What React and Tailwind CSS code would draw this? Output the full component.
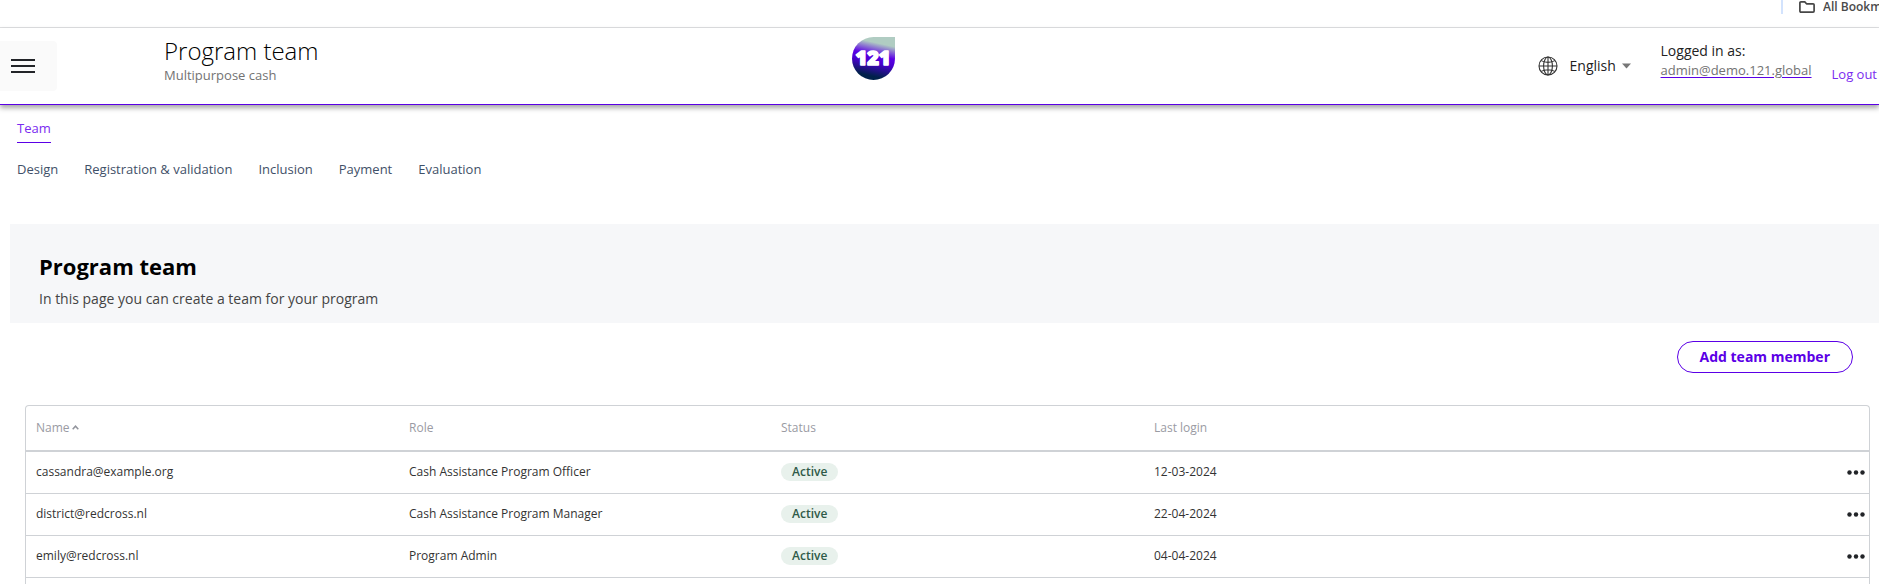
const phases = ["Design", "Registration & validation", "Inclusion", "Payment", "Evaluation"];

const members = [
  { name: "cassandra@example.org", role: "Cash Assistance Program Officer", status: "Active", lastLogin: "12-03-2024" },
  { name: "district@redcross.nl", role: "Cash Assistance Program Manager", status: "Active", lastLogin: "22-04-2024" },
  { name: "emily@redcross.nl", role: "Program Admin", status: "Active", lastLogin: "04-04-2024" },
];

function BookmarksBar() {
  return (
    <div className="flex h-7 shrink-0 items-start justify-end overflow-hidden border-b border-[#dfe0e2]">
      <div className="h-[14px] w-[2px] bg-[#d3e3fd]" />
      <svg className="mt-px ml-4 h-3 w-4 shrink-0" viewBox="0 0 16 12" fill="none" stroke="#474747" strokeWidth="1.7" strokeLinejoin="round">
        <path d="M0.9 1.9a1 1 0 0 1 1-1h3.900l1.700 1.900h6.600a1 1 0 0 1 1 1v6.300a1 1 0 0 1-1 1H1.900a1 1 0 0 1-1-1z" />
      </svg>
      <div className="ml-2 w-14 overflow-hidden text-xs leading-[14px] font-semibold whitespace-nowrap text-[#4a4a4a]">
        All Bookmarks
      </div>
    </div>
  );
}

function Logo() {
  return (
    <svg className="h-[43px] w-[43px]" viewBox="0 0 43 43" role="img" aria-label="121">
      <defs>
        <linearGradient id="drop" x1="0.62" y1="0" x2="0.4" y2="1">
          <stop offset="0.14" stopColor="#b0ccc2" />
          <stop offset="0.42" stopColor="#5b00e6" />
          <stop offset="0.58" stopColor="#4a00cf" />
          <stop offset="0.9" stopColor="#00214a" />
        </linearGradient>
      </defs>
      <path d="M21.500 0H43V21.500A21.500 21.500 0 1 1 21.500 0Z" fill="url(#drop)" />
      <text x="21" y="28" textAnchor="middle" fontFamily="'Open Sans', sans-serif" fontWeight="800" fontSize="20" fill="#fff" stroke="#fff" strokeWidth="1.6" strokeLinejoin="round">
        121
      </text>
    </svg>
  );
}

function GlobeIcon() {
  return (
    <svg className="mr-3 size-5" viewBox="0 0 20 20" fill="none" stroke="#333" strokeWidth="1.100" aria-hidden="true">
      <circle cx="10" cy="10" r="9" />
      <ellipse cx="10" cy="10" rx="4.400" ry="9" />
      <path d="M10 1v18M1 10h18M3.200 4.600C7 6.900 13 6.900 16.800 4.600M3.200 15.400c3.800-2.300 9.800-2.300 13.600 0" />
    </svg>
  );
}

function Header() {
  return (
    <header className="relative grid h-[77px] shrink-0 grid-cols-[13fr_auto_15fr] border-b border-[#5b00e6] shadow-[0_3px_5px_rgba(0,0,0,0.35)]">
      <div className="flex items-start">
        <button type="button" aria-label="Menu" className="mt-[13px] flex h-[50px] w-[57px] flex-col justify-center gap-1 rounded-r-sm bg-[#fafafa] pl-[11px]">
          <span className="h-[2px] w-6 bg-[#222428]" />
          <span className="h-[2px] w-6 bg-[#222428]" />
          <span className="h-[2px] w-6 bg-[#222428]" />
        </button>
        <div className="mt-[7px] ml-[107px]">
          <h1 className="text-2xl leading-8 font-light text-black">Program team</h1>
          <p className="text-[13px] leading-4 font-normal text-[#737373]">Multipurpose cash</p>
        </div>
      </div>
      <div className="pt-[9px]">
        <Logo />
      </div>
      <div className="flex items-start justify-end">
        <label className="mt-7 flex items-center">
          <GlobeIcon />
          <span className="sr-only">Language</span>
          <select className="w-[52px] appearance-none text-sm leading-5 text-[#222]">
            <option>English</option>
          </select>
          <svg className="h-[6px] w-[9px]" viewBox="0 0 9 6" fill="#777">
            <path d="M0 0.500h9L4.500 5.500z" />
          </svg>
        </label>
        <div className="mt-[13px] ml-[30px] text-[#222]">
          <p className="text-sm leading-5">Logged in as:</p>
          <a href="#account" className="block text-[13px] leading-[18px] text-[#737373] underline decoration-[#5b00e6] underline-offset-2">
            admin@demo.121.global
          </a>
        </div>
        <a href="#logout" className="mt-9 mr-[2px] ml-5 text-[13px] leading-5 text-[#7a2bf0]">
          Log out
        </a>
      </div>
    </header>
  );
}

function PhaseNav() {
  return (
    <nav className="flex shrink-0 flex-col items-start px-[17px] pt-[13px] text-[13px] leading-5">
      <a href="#team" className="border-b border-[#5b00e6] pb-1 text-[#7a2bf0]">
        Team
      </a>
      <div className="mt-4 flex gap-[26px] text-[#3f5068]">
        {phases.map((phase) => (
          <a key={phase} href="#phase">
            {phase}
          </a>
        ))}
      </div>
    </nav>
  );
}

function TeamTable() {
  return (
    <div className="mt-8 mr-[9px] ml-[25px] rounded-t border border-b-0 border-[#cfd2d6]">
      <table className="w-full table-fixed border-collapse text-left text-xs text-[#333]">
        <colgroup>
          <col className="w-[383px]" />
          <col className="w-[372px]" />
          <col className="w-[373px]" />
          <col />
          <col className="w-10" />
        </colgroup>
        <thead>
          <tr className="h-[45px] border-b-2 border-[#cfd2d6] text-[#9a9ba3]">
            <th className="pl-[10px] font-normal" aria-sort="ascending">
              Name
              <svg className="ml-[2px] inline h-[5px] w-[7px] align-[2px]" viewBox="0 0 7 5" fill="none" stroke="#92949c" strokeWidth="1.5">
                <path d="M0.700 4.200 3.500 1.200 6.300 4.200" />
              </svg>
            </th>
            <th className="font-normal">Role</th>
            <th className="font-normal">Status</th>
            <th className="font-normal">Last login</th>
            <td />
          </tr>
        </thead>
        <tbody>
          {members.map((member) => (
            <tr key={member.name} className="h-[42px] border-b border-[#cfd2d6]">
              <td className="pl-[10px]">{member.name}</td>
              <td>{member.role}</td>
              <td>
                <span className="inline-block rounded-full bg-[#e8f1ec] px-[11px] leading-[18px] font-semibold text-[#2f5a48]">
                  {member.status}
                </span>
              </td>
              <td>{member.lastLogin}</td>
              <td className="pr-1">
                <button type="button" aria-label={"Actions for " + member.name} className="ml-auto block py-2">
                  <svg className="h-[5px] w-[18px]" viewBox="0 0 18 5" fill="#222428">
                    <circle cx="2.500" cy="2.500" r="2.200" />
                    <circle cx="9" cy="2.500" r="2.200" />
                    <circle cx="15.500" cy="2.500" r="2.200" />
                  </svg>
                </button>
              </td>
            </tr>
          ))}
          <tr className="h-[42px]">
            <td colSpan={5} />
          </tr>
        </tbody>
      </table>
    </div>
  );
}

export default function App() {
  return (
    <div className="flex h-screen flex-col overflow-hidden bg-white font-['Open_Sans','Noto_Sans',sans-serif]">
      <BookmarksBar />
      <Header />
      <PhaseNav />
      <main className="mt-[45px]">
        <section className="ml-[10px] bg-[#f6f7f9] px-[29px] pt-[26px] pb-3">
          <h2 className="text-[22px] leading-8 font-bold text-black">Program team</h2>
          <p className="mt-[5px] text-sm leading-6 text-[#444]">In this page you can create a team for your program</p>
        </section>
        <div className="mt-[18px] mr-[26px] flex justify-end">
          <button type="button" className="h-8 rounded-full border border-[#5b00e6] px-[22px] text-sm font-bold text-[#5b00e6]">
            Add team member
          </button>
        </div>
        <TeamTable />
      </main>
    </div>
  );
}
